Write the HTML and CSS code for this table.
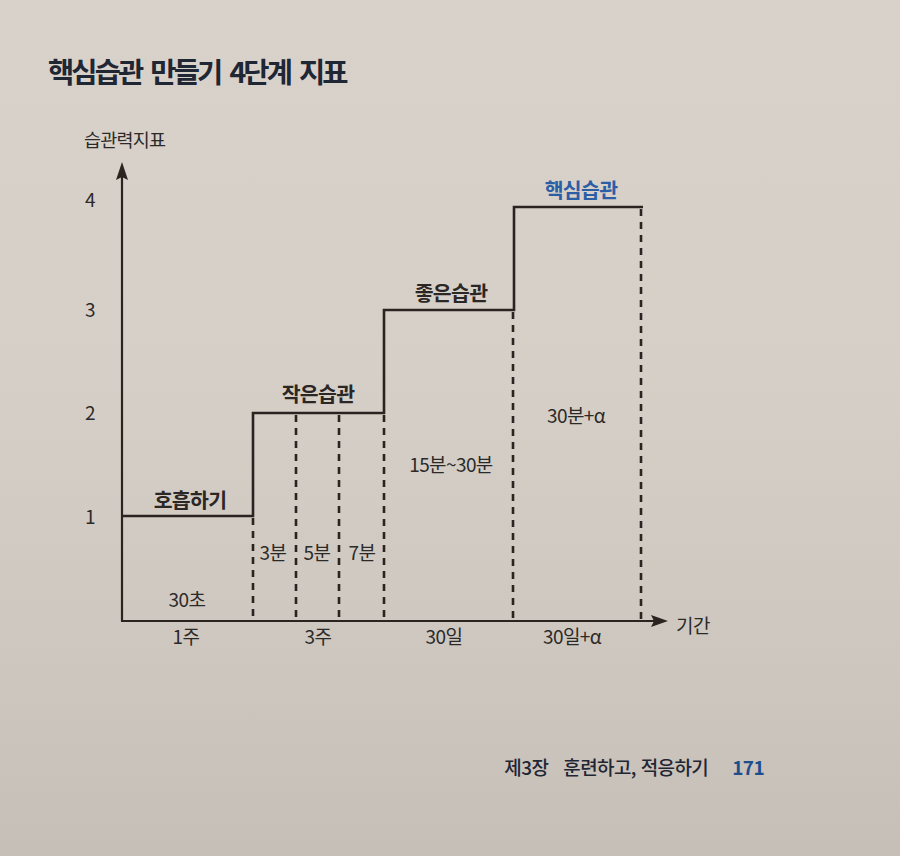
FILE: index.html
```html
<!DOCTYPE html>
<html lang="ko">
<head>
<meta charset="utf-8">
<title>핵심습관 만들기 4단계 지표</title>
<link rel="stylesheet" href="styles.css">
</head>
<body>
<div class="page">
  <h1 class="title">핵심습관 만들기 4단계 지표</h1>
  <svg class="chart" width="900" height="560" viewBox="0 0 900 560" xmlns="http://www.w3.org/2000/svg">
    <g class="axis">
      <line x1="122" y1="76" x2="122" y2="521"/>
      <line x1="121" y1="521" x2="654" y2="521"/>
    </g>
    <polygon class="arrow" points="122,62 116,80 122,77 128,80"/>
    <polygon class="arrow" points="668,521 651,515 654,521 651,527"/>
    <path class="step" d="M122,416 H253 V313 H384 V210 H514 V107 H643"/>
    <g class="dash">
      <line x1="253" y1="418" x2="253" y2="521"/>
      <line x1="296" y1="315" x2="296" y2="521"/>
      <line x1="339" y1="315" x2="339" y2="521"/>
      <line x1="384" y1="315" x2="384" y2="521"/>
      <line x1="513" y1="212" x2="513" y2="521"/>
      <line x1="641" y1="109" x2="641" y2="521"/>
    </g>
    <text class="lbl ylabel" x="84" y="47">습관력지표</text>
    <text class="lbl num" x="85" y="107">4</text>
    <text class="lbl num" x="85" y="217">3</text>
    <text class="lbl num" x="85" y="320">2</text>
    <text class="lbl num" x="85" y="424">1</text>
    <text class="lbl xlabel" x="676" y="533">기간</text>

    <text class="stage" x="190" y="408">호흡하기</text>
    <text class="stage" x="318" y="302">작은습관</text>
    <text class="stage" x="451" y="201">좋은습관</text>
    <text class="stage key" x="581" y="98">핵심습관</text>

    <text class="lbl mid" x="187" y="507">30초</text>
    <text class="lbl mid" x="273" y="460">3분</text>
    <text class="lbl mid" x="317" y="460">5분</text>
    <text class="lbl mid" x="362" y="460">7분</text>
    <text class="lbl mid" x="451" y="372">15분~30분</text>
    <text class="lbl mid" x="576" y="323">30분+α</text>

    <text class="lbl mid" x="186" y="544">1주</text>
    <text class="lbl mid" x="318" y="544">3주</text>
    <text class="lbl mid" x="444" y="544">30일</text>
    <text class="lbl mid" x="572" y="544">30일+α</text>
  </svg>
  <footer class="folio">
    <span class="chapter">제3장</span>
    <span class="section">훈련하고, 적응하기</span>
    <span class="pageno">171</span>
  </footer>
</div>
</body>
</html>
```

FILE: styles.css
```css
html, body {
  margin: 0;
  padding: 0;
}

body {
  background: #d3ccc5;
  font-family: "Noto Sans CJK KR", "Noto Sans", sans-serif;
}

.page {
  width: 900px;
  height: 856px;
  overflow: hidden;
  background: linear-gradient(180deg, #d9d2cb 0%, #d6cfc8 45%, #cdc6be 80%, #c6bfb7 100%);
}

.title {
  margin: 0;
  padding: 53px 0 0 48px;
  font-size: 28.5px;
  line-height: 36px;
  font-weight: 700;
  letter-spacing: -2.9px;
  word-spacing: 4px;
  color: #1f2634;
}

.chart {
  display: block;
  margin-top: 11px;
}

.axis line {
  stroke: #2a2421;
  stroke-width: 2.2;
}

.arrow {
  fill: #2a2421;
}

.step {
  fill: none;
  stroke: #2a2421;
  stroke-width: 2.6;
  stroke-linejoin: miter;
}

.dash line {
  stroke: #2a2421;
  stroke-width: 2.6;
  stroke-dasharray: 7 6;
}

.lbl {
  font-family: "Noto Sans CJK KR", "Noto Sans", sans-serif;
  font-size: 19px;
  fill: #2b2a29;
  letter-spacing: -0.6px;
}

.ylabel {
  font-size: 18.5px;
  letter-spacing: -0.8px;
}

.num {
  font-size: 19px;
}

.xlabel {
  font-size: 19px;
}

.mid {
  text-anchor: middle;
}

.stage {
  font-family: "Noto Sans CJK KR", "Noto Sans", sans-serif;
  font-size: 20.5px;
  font-weight: 700;
  fill: #2a2725;
  text-anchor: middle;
  letter-spacing: -0.7px;
}

.stage.key {
  fill: #2c5ea6;
}

.folio {
  display: flex;
  justify-content: flex-end;
  align-items: baseline;
  gap: 15px;
  margin-top: 94px;
  padding-right: 136px;
  font-size: 19px;
  line-height: 26px;
  font-weight: 500;
  color: #1f2634;
  letter-spacing: -0.6px;
}

.section {
  margin-right: 9px;
}

.pageno {
  font-weight: 700;
  color: #1d4e8e;
}
```
